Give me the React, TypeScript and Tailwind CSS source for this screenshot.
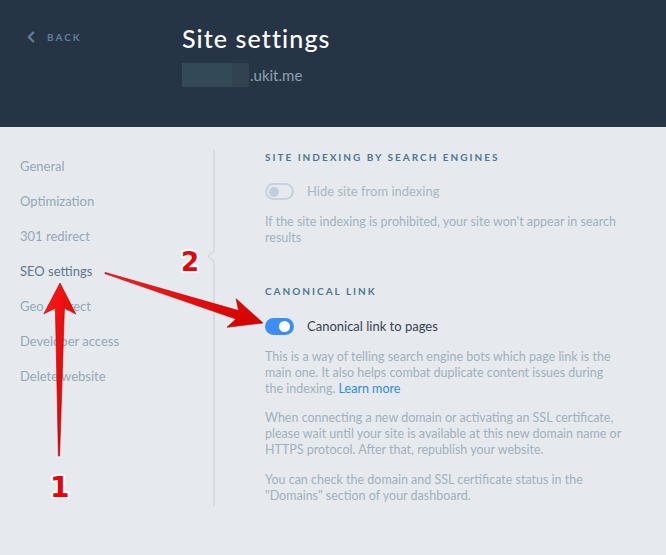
import React from "react";
import { ChevronLeft } from "lucide-react";

const menu = [
  "General",
  "Optimization",
  "301 redirect",
  "SEO settings",
  "Geo redirect",
  "Developer access",
  "Delete website",
];

type Pt = [number, number];

// builds a tapered annotation arrow polygon
const arrowPoints = (
  tail: Pt,
  tip: Pt,
  headLen: number,
  headHalf: number,
  shaftTail: number,
  shaftHead: number
) => {
  const dx = tip[0] - tail[0];
  const dy = tip[1] - tail[1];
  const len = Math.hypot(dx, dy);
  const ux = dx / len;
  const uy = dy / len;
  const px = -uy;
  const py = ux;
  const at = (d: number, o: number): Pt => [
    tip[0] - ux * d + px * o,
    tip[1] - uy * d + py * o,
  ];
  const pts: Pt[] = [
    tip,
    at(headLen + 3, headHalf),
    at(headLen - 3, shaftHead),
    [tail[0] + px * shaftTail, tail[1] + py * shaftTail],
    [tail[0] - px * shaftTail, tail[1] - py * shaftTail],
    at(headLen - 3, -shaftHead),
    at(headLen + 3, -headHalf),
  ];
  return pts.map((p) => p.map((v) => v.toFixed(1)).join(",")).join(" ");
};

const Toggle = ({ on }: { on: boolean }) =>
  on ? (
    <div className="w-[29px] h-[17px] rounded-full bg-[#3a8ef5] flex items-center justify-end pr-[4px]">
      <div className="w-[11px] h-[11px] rounded-full bg-white" />
    </div>
  ) : (
    <div className="w-[29px] h-[17px] rounded-full border-2 border-[#c6d3dc] flex items-center pl-[2px]">
      <div className="w-[10px] h-[10px] rounded-full bg-[#c1cfda]" />
    </div>
  );

export default function App() {
  return (
    <div
      className="relative w-[666px] h-[555px] bg-[#e6eaee] overflow-hidden"
      style={{ fontFamily: "Lato, 'Open Sans', sans-serif" }}
    >
      {/* Header */}
      <div className="h-[127px] bg-[#263545] flex pt-[24px]">
        <div className="w-[182px] pl-[22px] pt-[4px]">
          <div className="flex items-center gap-[7px] text-[#5f7f98]">
            <ChevronLeft size={18} strokeWidth={3} />
            <span className="text-[10px] font-bold tracking-[0.2em]">BACK</span>
          </div>
        </div>
        <div className="flex flex-col">
          <h1 className="text-[25px] leading-[28px] text-white font-medium tracking-[1.1px]">
            Site settings
          </h1>
          <div className="flex items-center mt-[11px]">
            <div className="w-[50px] h-[24px] bg-[#344958]" />
            <div className="w-[17px] h-[24px] bg-[#314350]" />
            <span className="text-[15px] text-[#8aa1b2] ml-[1px]">.ukit.me</span>
          </div>
        </div>
      </div>

      {/* Body */}
      <div className="flex pt-[22px]">
        <nav className="w-[213px] pl-[20px] flex flex-col">
          {menu.map((m) => (
            <div
              key={m}
              className={`h-[35px] flex items-center text-[13px] ${
                m === "SEO settings" ? "text-[#5b7890]" : "text-[#93a8b8]"
              }`}
            >
              {m}
            </div>
          ))}
        </nav>

        <div className="relative border-l-2 border-[#d5dde3] mt-[1px] pl-[50px] pb-[2px]">
          {/* notch on the divider */}
          <div className="absolute left-[-6px] top-[101px] w-[10px] h-[10px] rotate-45 bg-[#e6eaee] border-l-2 border-b-2 border-[#d5dde3]" />

          <h3 className="h-[14px] flex items-center text-[10px] font-bold tracking-[0.2em] text-[#4a7893]">
            SITE INDEXING BY SEARCH ENGINES
          </h3>
          <div className="flex items-center gap-[13px] mt-[18px]">
            <Toggle on={false} />
            <span className="text-[13px] text-[#a6b7c3]">Hide site from indexing</span>
          </div>
          <p className="mt-[12px] text-[12.5px] leading-[16px] text-[#a0b2bf]">
            If the site indexing is prohibited, your site won't appear in search
            <br />
            results
          </p>

          <h3 className="mt-[39px] h-[14px] flex items-center text-[10px] font-bold tracking-[0.2em] text-[#4a7893]">
            CANONICAL LINK
          </h3>
          <div className="flex items-center gap-[13px] mt-[18px]">
            <Toggle on />
            <span className="text-[13px] text-[#36434f]">Canonical link to pages</span>
          </div>
          <p className="mt-[13px] text-[12.5px] leading-[16px] text-[#9fb1be]">
            This is a way of telling search engine bots which page link is the
            <br />
            main one. It also helps combat duplicate content issues during
            <br />
            the indexing. <span className="text-[#2e8be6]">Learn more</span>
          </p>
          <p className="mt-[13px] text-[12.5px] leading-[16px] text-[#9fb1be]">
            When connecting a new domain or activating an SSL certificate,
            <br />
            please wait until your site is available at this new domain name or
            <br />
            HTTPS protocol. After that, republish your website.
          </p>
          <p className="mt-[14px] text-[12.5px] leading-[16px] text-[#9fb1be]">
            You can check the domain and SSL certificate status in the
            <br />
            "Domains" section of your dashboard.
          </p>
        </div>
      </div>

      {/* Red annotations drawn over the screenshot */}
      <svg
        className="absolute inset-0 pointer-events-none"
        width="666"
        height="555"
        viewBox="0 0 666 555"
      >
        <defs>
          <linearGradient id="red" x1="0" y1="0" x2="1" y2="1">
            <stop offset="0" stopColor="#ff1a1a" />
            <stop offset="1" stopColor="#d10000" />
          </linearGradient>
        </defs>
        <g fill="url(#red)" stroke="#b00000" strokeWidth="0.6" strokeLinejoin="round">
          <polygon points={arrowPoints([59, 456], [60, 283], 28, 16, 0.6, 4.5)} />
          <polygon points={arrowPoints([105, 273], [263, 323], 30, 15, 0.6, 4.5)} />
        </g>
        <g
          fontFamily="'DejaVu Sans', sans-serif"
          fontWeight="bold"
          fill="#e8000b"
          stroke="#ffffff"
          strokeWidth="4"
          strokeLinejoin="round"
          style={{ paintOrder: "stroke" }}
        >
          <text x="181" y="271" fontSize="26">2</text>
          <text x="50" y="497" fontSize="28">1</text>
        </g>
      </svg>
    </div>
  );
}
